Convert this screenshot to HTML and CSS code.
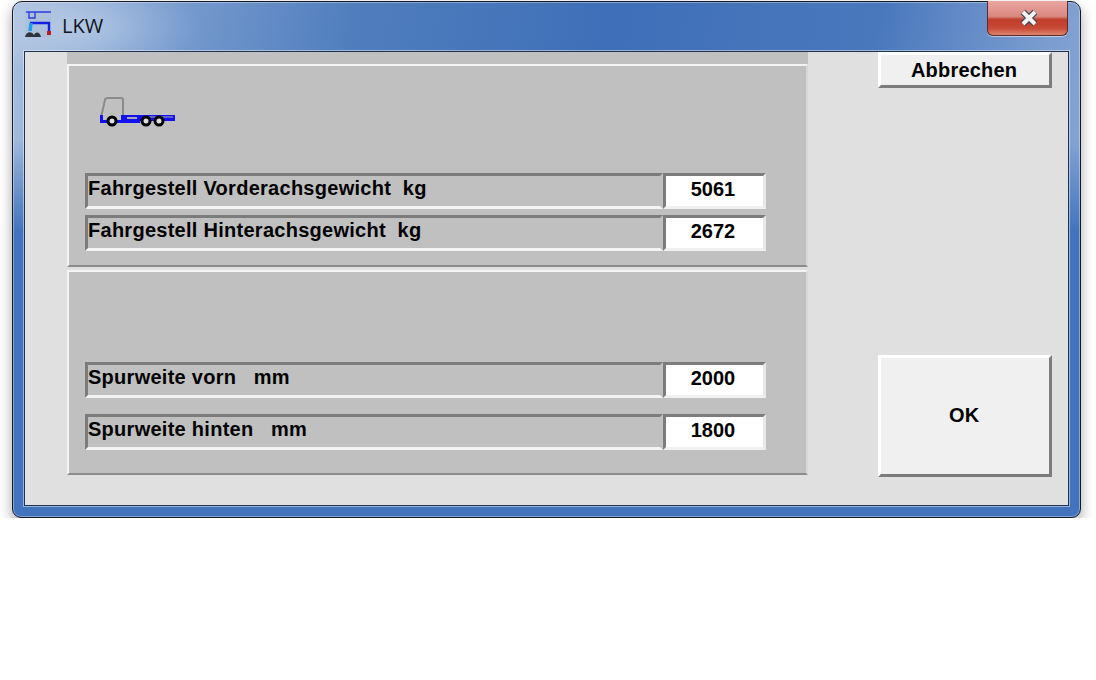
FILE: index.html
```html
<!DOCTYPE html>
<html>
<head>
  <title>LKW</title>
  <link rel="stylesheet" href="styles.css">
</head>
<body>
  <div class="window">
    <div class="title-bar">
      <svg class="app-icon" width="28" height="28" viewBox="0 0 28 28">
        <rect x="1" y="1" width="26" height="26" fill="#a9bcd6" opacity="0.55"/>
        <path d="M2 2H27M5 2V8H11V2M5 8H11" fill="none" stroke="#2b3fe0" stroke-width="1.4"/>
        <path d="M6 13H25V23" fill="none" stroke="#1420e8" stroke-width="2.4"/>
        <path d="M7 13L6 21" stroke="#18a0f0" stroke-width="3.5"/>
        <rect x="23" y="21" width="4" height="4" fill="#c01818"/>
        <path d="M1 27C2 21 8 21 10 25C12 21 16 22 17 27Z" fill="#30343c"/>
      </svg>
      <span class="title-text">LKW</span>
      <div class="close-btn">
        <svg width="24" height="18" viewBox="0 0 24 18">
          <path d="M6 3L18 15M18 3L6 15" stroke="#3c4450" stroke-width="6.5"/>
          <path d="M6 3L18 15M18 3L6 15" stroke="#f2f4f6" stroke-width="4"/>
        </svg>
      </div>
    </div>
    <div class="client">
      <div class="left-col">
        <div class="top-strip"></div>
        <div class="group group-one">
          <svg class="truck" width="78" height="32" viewBox="0 0 78 32">
            <path d="M2 20L6 3Q6 1 9 1H22Q24 1 24 3V20" fill="none" stroke="#8a8a8a" stroke-width="2"/>
            <rect x="1" y="18" width="3" height="7" fill="#1010f0"/>
            <rect x="22" y="18" width="54" height="6" fill="#1010f0"/>
            <rect x="1" y="23" width="40" height="3" fill="#1010f0"/>
            <rect x="28" y="20" width="10" height="2" fill="#a8a8a8"/>
            <rect x="44" y="19.5" width="30" height="1" fill="#b0b0a0"/>
            <circle cx="13" cy="24" r="4" fill="#dddddd" stroke="#000" stroke-width="3"/>
            <circle cx="47" cy="24" r="4" fill="#dddddd" stroke="#000" stroke-width="3"/>
            <circle cx="60" cy="24" r="4" fill="#dddddd" stroke="#000" stroke-width="3"/>
          </svg>
          <div class="row row-a">
            <div class="label">Fahrgestell Vorderachsgewicht&nbsp; kg</div>
            <div class="value">5061</div>
          </div>
          <div class="row row-b">
            <div class="label">Fahrgestell Hinterachsgewicht&nbsp; kg</div>
            <div class="value">2672</div>
          </div>
        </div>
        <div class="group group-two">
          <div class="row row-c">
            <div class="label">Spurweite vorn&nbsp;&nbsp; mm</div>
            <div class="value">2000</div>
          </div>
          <div class="row row-d">
            <div class="label">Spurweite hinten&nbsp;&nbsp; mm</div>
            <div class="value">1800</div>
          </div>
        </div>
      </div>
      <div class="right-col">
        <button class="btn btn-cancel">Abbrechen</button>
        <button class="btn btn-ok">OK</button>
      </div>
    </div>
  </div>
</body>
</html>
```

FILE: styles.css
```css
/* Page */
body {
  margin: 0;
  background-color: #ffffff;
  font-family: "Liberation Sans", Arial, sans-serif;
}

/* Window frame */
.window {
  width: 1069px;
  height: 517px;
  margin: 1px 0 0 12px;
  padding: 0 11px 11px;
  box-sizing: border-box;
  display: flex;
  flex-direction: column;
  border: 1px solid #141a26;
  border-radius: 10px 10px 9px 9px;
  background:
    radial-gradient(ellipse 120px 50px at 70px 25px, rgba(255, 255, 255, 0.3), rgba(255, 255, 255, 0)),
    linear-gradient(#4274bd, #4274bd) 0 230px / 100% 100% no-repeat,
    linear-gradient(rgba(66, 116, 189, 0) 60%, #4274bd 100%) 0 0 / 100% 230px no-repeat,
    linear-gradient(100deg, #a9c0de 0%, #7d9fd0 12%, #4f7dbd 30%, #3f6fb8 52%, #4a78bd 75%, #7b9dcf 90%, #8fadd8 100%);
  box-shadow: 0 6px 14px rgba(0, 0, 0, 0.35), inset 0 0 0 1px rgba(255, 255, 255, 0.35);
}

.title-bar {
  height: 49px;
  flex-shrink: 0;
  display: flex;
  align-items: flex-start;
}
.app-icon {
  margin-top: 8px;
}
.title-text {
  margin: 10px 0 0 10px;
  font-family: "Open Sans", sans-serif;
  font-size: 20px;
  color: #10141c;
}
.close-btn {
  margin: -1px 1px 0 auto;
  padding-left: 3px;
  width: 81px;
  height: 35px;
  box-sizing: border-box;
  display: flex;
  align-items: center;
  justify-content: center;
  border: 1px solid #5c2a28;
  border-top: 0;
  border-radius: 0 0 6px 6px;
  background: linear-gradient(#e9a6a0 0%, #d98980 45%, #c03c2a 55%, #c84a36 80%, #dd8570 100%);
  box-shadow: 0 1px 0 rgba(255, 255, 255, 0.5);
}

/* Client area */
.client {
  flex: 1;
  display: flex;
  padding-left: 42px;
  padding-right: 16px;
  background-color: #e0e0e0;
  border: 1px solid #1f3350;
  box-shadow: 0 0 0 1px rgba(255, 255, 255, 0.45);
}
.left-col {
  width: 742px;
  display: flex;
  flex-direction: column;
}
.top-strip {
  height: 12px;
  background-color: #c0c0c0;
}
.group {
  box-sizing: border-box;
  background-color: #c0c0c0;
  border: 2px solid #f4f4f4;
  border-right-color: #d8d8d8;
  border-bottom-color: #8c8c8c;
  padding-left: 16px;
}
.group-one {
  height: 203px;
}
.group-two {
  height: 205px;
  margin-top: 3px;
  padding-top: 90px;
}
.truck {
  display: block;
  margin: 31px 0 0 14px;
}

/* Label + value rows */
.row {
  width: 681px;
  height: 36px;
  display: flex;
}
.row-a {
  margin-top: 44px;
}
.row-b {
  margin-top: 6px;
}
.row-d {
  margin-top: 16px;
}
.label {
  flex: 1;
  box-sizing: border-box;
  padding: 0;
  border: 3px solid #c0c0c0;
  border-top-color: #7c7c7c;
  border-left-color: #7c7c7c;
  border-bottom-color: #f4f4f4;
  font-size: 20px;
  font-weight: bold;
  letter-spacing: 0.27px;
  line-height: 24px;
  color: #000000;
  white-space: nowrap;
}
.value {
  width: 103px;
  box-sizing: border-box;
  padding-right: 3px;
  border: 3px solid #e8e8e8;
  border-top-color: #7c7c7c;
  border-left-color: #7c7c7c;
  border-bottom-color: #f0f0f0;
  background-color: #ffffff;
  font-size: 20px;
  font-weight: bold;
  line-height: 27px;
  text-align: center;
  color: #000000;
}

/* Buttons */
.right-col {
  margin-left: 70px;
  width: 174px;
  display: flex;
  flex-direction: column;
  justify-content: space-between;
  padding-bottom: 28px;
}
.btn {
  display: block;
  width: 100%;
  box-sizing: border-box;
  padding: 0 2px 0 0;
  background-color: #f0f0f0;
  border: 3px solid #ffffff;
  border-right-color: #7c7c7c;
  border-bottom-color: #7c7c7c;
  font-family: "Liberation Sans", Arial, sans-serif;
  font-size: 20px;
  font-weight: bold;
  letter-spacing: 0.2px;
  color: #000000;
}
.btn-cancel {
  height: 36px;
}
.btn-ok {
  height: 122px;
  padding-bottom: 2px;
}
```
